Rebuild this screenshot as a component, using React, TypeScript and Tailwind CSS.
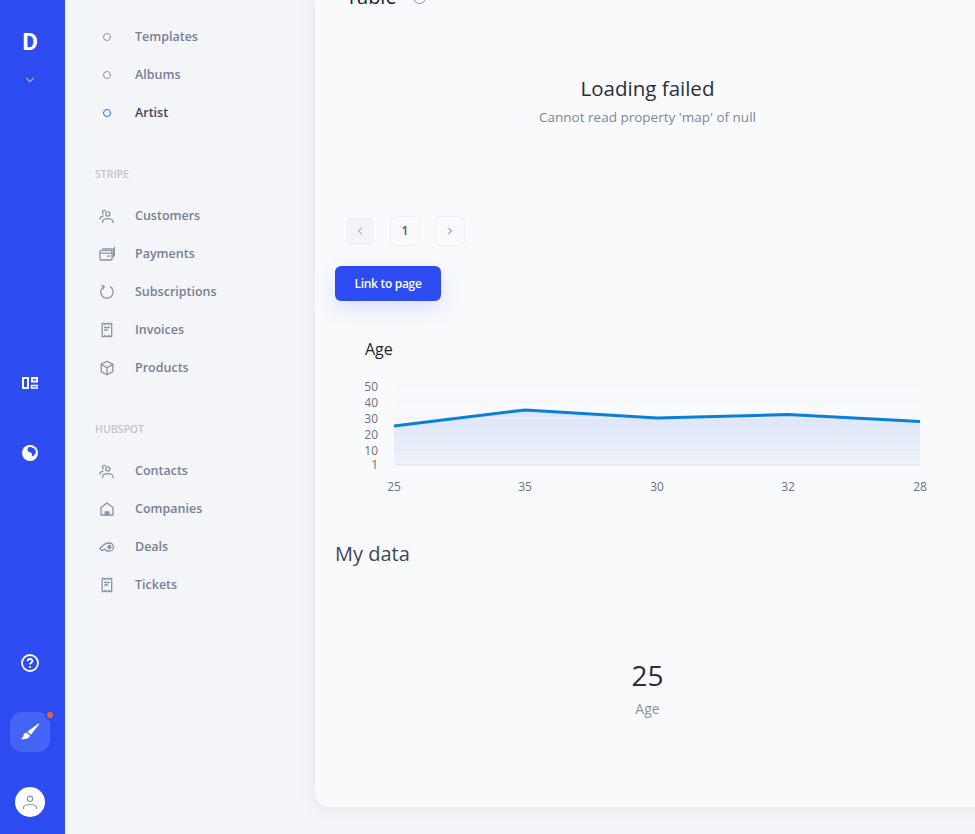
import { ChevronDown, ChevronLeft, ChevronRight } from "lucide-react";
import type { ReactNode } from "react";

const font = "font-['Open_Sans','Noto_Sans',sans-serif]";

function Glyph({ children, size = 16 }: { children: ReactNode; size?: number }) {
  return (
    <svg width={size} height={size} viewBox="0 0 16 16" fill="none" stroke="currentColor" strokeWidth="1.3" strokeLinecap="round" strokeLinejoin="round">
      {children}
    </svg>
  );
}

const UsersIcon = () => (
  <Glyph>
    <circle cx="8.800" cy="6" r="2.100" />
    <path d="M3.600 14.400v-.8c0-1.800 2-2.900 5.200-2.900s5.200 1.100 5.200 2.900v.8" />
    <path d="M6.600 2.800a2 2 0 0 0-3.200 1.400c0 .8.400 1.400 1 1.800" />
    <path d="M1 11c0-1.500 1-2.500 3-2.800" />
  </Glyph>
);
const WalletIcon = () => (
  <Glyph>
    <rect x="1" y="4.400" width="12" height="9.600" rx="1" />
    <path d="M1 7.200h12M8.500 10.200h2" />
    <path d="M3.500 2.800h10.200a.8.8 0 0 1 .8.8v7.400M15.600 1v8" />
  </Glyph>
);
const RefreshIcon = () => (
  <Glyph>
    <path d="M11.500 2.900a6.200 6.200 0 1 1-6.600-.3" />
    <path d="M2.800 1.400l2.400 1.100-1 2.300" />
  </Glyph>
);
const ReceiptIcon = () => (
  <Glyph>
    <path d="M3.200 1.500h2l.9 1 .9-1h2l.9 1 .9-1h1.900v13h-1.900l-.9-1-.9 1h-2l-.9-1-.9 1h-2z" />
    <path d="M5.600 5.500h4.800M5.600 8h3" />
  </Glyph>
);
const BoxIcon = () => (
  <Glyph>
    <path d="M8 1.200l5.800 3.200v7.200L8 14.800l-5.800-3.200V4.400z" />
    <path d="M2.200 4.400L8 7.800l5.800-3.400M8 7.800v7" />
  </Glyph>
);
const HomeIcon = () => (
  <Glyph>
    <path d="M2 14V6.600L8 2l6 4.600V14z" />
    <path d="M6.200 14v-3.200h3.600V14" fill="currentColor" />
  </Glyph>
);
const WhistleIcon = () => (
  <Glyph>
    <path d="M.8 9.200L4.600 6C5.800 4.800 7.600 4 10.400 4a4 4 0 0 1 0 8H7.600L6 10.200 2.600 11.600z" />
    <circle cx="10.400" cy="8" r="1.500" fill="currentColor" />
  </Glyph>
);

interface NavItem {
  label: string;
  icon?: ReactNode;
  active?: boolean;
}

const topItems: NavItem[] = [{ label: "Templates" }, { label: "Albums" }, { label: "Artist", active: true }];
const stripeItems: NavItem[] = [
  { label: "Customers", icon: <UsersIcon /> },
  { label: "Payments", icon: <WalletIcon /> },
  { label: "Subscriptions", icon: <RefreshIcon /> },
  { label: "Invoices", icon: <ReceiptIcon /> },
  { label: "Products", icon: <BoxIcon /> },
];
const hubspotItems: NavItem[] = [
  { label: "Contacts", icon: <UsersIcon /> },
  { label: "Companies", icon: <HomeIcon /> },
  { label: "Deals", icon: <WhistleIcon /> },
  { label: "Tickets", icon: <ReceiptIcon /> },
];

function NavRow({ label, icon, active }: NavItem) {
  return (
    <div className="flex h-[38px] items-center pl-[30px]">
      <div className="flex w-[24px] justify-center text-[#8a94a6]">
        {icon ?? (
          <span className={`h-[8px] w-[8px] rounded-full border-[1.5px] ${active ? "border-[#3f5ff5]" : "border-[#8a94a6]"}`} />
        )}
      </div>
      <span className={`ml-[16px] text-[12.5px] font-semibold ${active ? "text-[#3d4657]" : "text-[#768094]"}`}>{label}</span>
    </div>
  );
}

function NavHeading({ children }: { children: ReactNode }) {
  return (
    <div className="mt-[35px] mb-[14px] flex h-[16px] items-center pl-[30px] text-[10.5px] font-semibold text-[#c0c6d2]">
      {children}
    </div>
  );
}

function Rail() {
  return (
    <aside className="flex h-full w-[65px] shrink-0 flex-col items-center bg-[#2c4bf0] pr-[5px] text-white">
      <div className="mt-[28px] h-[28px] font-['Roboto'] text-[24px] leading-[28px] font-bold">D</div>
      <ChevronDown className="mt-[17px] text-[#9db0fa]" size={14} />
      <svg className="mt-[290px]" width="16" height="12" viewBox="0 0 16 12" fill="none" stroke="currentColor" strokeWidth="2">
        <rect x="1" y="1" width="5" height="10" />
        <rect x="10" y="1" width="5" height="3.500" />
        <rect x="9.500" y="8.500" width="6" height="2.500" strokeWidth="1.500" />
      </svg>
      <svg className="mt-[56px]" width="16" height="16" viewBox="0 0 16 16">
        <circle cx="8" cy="8" r="8" fill="white" />
        <path d="M6.500 2.200C9 1.600 12.500 2.400 13.800 6.200 14 8.200 12.600 10.400 10.200 11.600 9.400 9.800 10.600 8.400 8.800 7.600 7 7 5.800 6.600 5.600 5 5.500 3.800 6 3 6.500 2.200Z" fill="#2c4bf0" />
      </svg>
      <svg className="mt-[193px]" width="18" height="18" viewBox="0 0 18 18" fill="none" stroke="white" strokeWidth="1.800">
        <circle cx="9" cy="9" r="8" />
        <path d="M6.600 7.200c0-3 4.800-3 4.800-.1 0 1.700-2.400 1.800-2.400 3.500" strokeWidth="1.900" />
        <circle cx="9" cy="13" r="1.100" fill="white" stroke="none" />
      </svg>
      <div className="relative mt-[40px] flex h-[40px] w-[40px] items-center justify-center rounded-[12px] bg-[#4464f5]">
        <svg width="20" height="18" viewBox="0 0 20 18" fill="white">
          <path d="M18.500 0.500 L7.500 8.500 L10.800 11.700 L19.300 1.300 Z" />
          <path d="M6.500 9.500 L10 12.800 C9 15.800 5 16.800 0.500 16 C3 15.200 3 13.500 3.500 12 C4 10.500 5 9.700 6.500 9.500 Z" />
        </svg>
        <span className="absolute top-[-2px] right-[-5px] h-[10px] w-[10px] rounded-full border-2 border-[#2c4bf0] bg-[#f0602f]" />
      </div>
      <div className="mt-[35px] flex h-[30px] w-[30px] items-center justify-center rounded-full bg-white text-[#8a94a6]">
        <svg width="16" height="16" viewBox="0 0 16 16" fill="none" stroke="currentColor" strokeWidth="1.200" strokeLinecap="round">
          <circle cx="8" cy="4.800" r="2.700" />
          <path d="M1.500 14.500v-1c0-2 2.500-3 6.500-3s6.500 1 6.500 3v1" />
        </svg>
      </div>
    </aside>
  );
}

function SubNav() {
  return (
    <nav className="h-full w-[250px] shrink-0 bg-[#f3f5f9] pt-[18px]">
      {topItems.map((item) => (
        <NavRow key={item.label} {...item} />
      ))}
      <NavHeading>STRIPE</NavHeading>
      {stripeItems.map((item) => (
        <NavRow key={item.label} {...item} />
      ))}
      <NavHeading>HUBSPOT</NavHeading>
      {hubspotItems.map((item) => (
        <NavRow key={item.label} {...item} />
      ))}
    </nav>
  );
}

const ticks = [
  { label: "50", y: 5 },
  { label: "40", y: 21 },
  { label: "30", y: 37 },
  { label: "20", y: 53 },
  { label: "10", y: 69 },
  { label: "1", y: 84 },
];

function AgeChart() {
  const line = "M29 45 L160 29 L292 37 L423 33.500 L555 40.500";
  return (
    <svg className="mt-[15px] block" width="600" height="126" viewBox="0 -6 600 126">
      <defs>
        <linearGradient id="area" x1="0" y1="0" x2="0" y2="1">
          <stop offset="0%" stopColor="#dbe4fa" />
          <stop offset="100%" stopColor="#eff2f8" />
        </linearGradient>
      </defs>
      <path d={`${line} L555 84 L29 84 Z`} fill="url(#area)" />
      {ticks.map((t) => (
        <g key={t.label}>
          <line x1="29" x2="555" y1={t.y} y2={t.y} stroke={t.y > 40 ? "#dfe5f5" : "#eef0f5"} />
          <text x="13" y={t.label === "1" ? t.y + 3.500 : t.y + 4.500} textAnchor="end" fontSize="12" fontFamily="Open Sans" fill="#6b7280">
            {t.label}
          </text>
        </g>
      ))}
      <path d={line} fill="none" stroke="#0a7fd6" strokeWidth="3" />
      {[
        { x: 29, l: "25" },
        { x: 160, l: "35" },
        { x: 292, l: "30" },
        { x: 423, l: "32" },
        { x: 555, l: "28" },
      ].map((t) => (
        <text key={t.x} x={t.x} y="110" textAnchor="middle" fontSize="12" fontFamily="Open Sans" fill="#6b7280">
          {t.l}
        </text>
      ))}
    </svg>
  );
}

function Main() {
  return (
    <main className="h-[807px] min-w-0 flex-1 overflow-hidden rounded-bl-[14px] bg-[#f9fafc] shadow-[0_0_12px_4px_#e9ebf1]">
      <div className="-mt-[16px] flex h-[26px] items-center gap-[16px] pl-[31px]">
        <span className="text-[20px] leading-[26px] text-[#1f2430]">Table</span>
        <span className="h-[13px] w-[13px] rounded-full border-[1.5px] border-[#8a94a6]" />
      </div>
      <div className="mt-[64px] flex flex-col items-center pl-[5px]">
        <div className="text-[20.5px] leading-[28px] text-[#2a2f3a]">Loading failed</div>
        <div className="mt-[5px] text-[13.5px] leading-[20px] text-[#7d8799]">Cannot read property 'map' of null</div>
      </div>
      <div className="mt-[89px] flex items-center pl-[31px]">
        <button className="flex h-[28px] w-[28px] items-center justify-center rounded-[4px] bg-[#f2f4f8] text-[#8a94a6]">
          <ChevronLeft size={12} />
        </button>
        <button className="ml-[16px] h-[30px] w-[30px] rounded-[6px] border border-[#edeff4] text-[12px] font-semibold text-[#4a5568]">1</button>
        <button className="ml-[15px] flex h-[30px] w-[30px] items-center justify-center rounded-[6px] border border-[#edeff4] text-[#6b7280]">
          <ChevronRight size={12} />
        </button>
      </div>
      <button className="mt-[20px] ml-[20px] flex h-[35px] w-[106px] items-center justify-center rounded-[6px] bg-[#2c4bf0] text-[12px] font-semibold tracking-[-0.3px] text-white shadow-[0_8px_20px_#2c4bf026]">
        Link to page
      </button>
      <div className="mt-[37px] pl-[50px] text-[16px] leading-[22px] text-[#1f2430]">Age</div>
      <div className="pl-[50px]">
        <AgeChart />
      </div>
      <div className="mt-[39px] pl-[20px] text-[20px] leading-[28px] text-[#3d4657]">My data</div>
      <div className="mt-[89px] flex flex-col items-center pl-[5px]">
        <div className="text-[28px] leading-[36px] text-[#2a2f3a]">25</div>
        <div className="mt-[6px] text-[14px] leading-[20px] text-[#8a94a6]">Age</div>
      </div>
    </main>
  );
}

export default function App() {
  return (
    <div className={`flex h-[834px] w-[975px] overflow-hidden bg-[#f3f5f9] ${font}`}>
      <Rail />
      <SubNav />
      <Main />
    </div>
  );
}
